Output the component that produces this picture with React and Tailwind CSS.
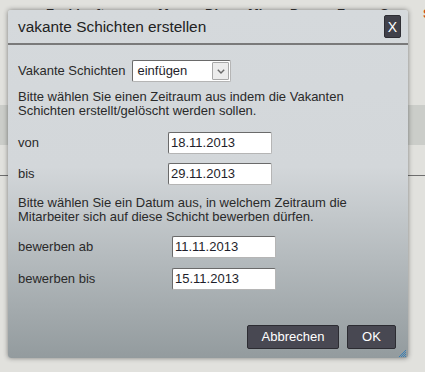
export default function App() {
  const font = "font-['Liberation_Sans',Arial,sans-serif]";
  const Input = ({ value }) => (
    <div className="w-[104px] h-[22px] bg-white border border-[#b5b5b5] border-t-[#6a6a6a] border-l-[#6a6a6a] rounded-[2px] pl-[2px] flex items-center text-[13px] text-[#1e1e2a]">
      {value}
    </div>
  );
  return (
    <div className={`relative w-[425px] h-[372px] overflow-hidden bg-[#e1e1dd] ${font}`}>
      {/* background page */}
      <div className="flex pt-[6px] text-[13px] font-bold text-[#333] leading-[15px] whitespace-nowrap">
        <div className="shrink-0 ml-[46px] w-[112px]">Fachkraft</div>
        <div className="shrink-0 w-[47px]">Mo</div>
        <div className="shrink-0 w-[43px]">Di</div>
        <div className="shrink-0 w-[42px]">Mi</div>
        <div className="shrink-0 w-[47px]">Do</div>
        <div className="shrink-0 w-[43px]">Fr</div>
        <div className="shrink-0 w-[43px]">Sa</div>
        <div className="shrink-0 text-[#d04a1a]">So</div>
      </div>
      <div className="mt-[84px] h-[40px] bg-[#cbcdc9]" />
      <div className="mt-[30px] h-px bg-[#6e6e6e]" />

      {/* dialog */}
      <div className="absolute left-[8px] top-[10px] w-[400px] h-[348px] rounded-[3px] shadow-[0_0_5px_rgba(0,0,0,0.45)] bg-[linear-gradient(to_bottom,#d5d9dc_0%,#d3d7da_45%,#939b9e_100%)] flex flex-col">
        <div className="h-[33px] flex items-center justify-between pl-[10px] pr-[7px]">
          <span className="text-[15.4px] text-[#222]">vakante Schichten erstellen</span>
          <div className="w-[17px] h-[23px] rounded-[2px] bg-[#41414a] border border-[#2e2e34] flex items-center justify-center text-white text-[14px] leading-none">
            X
          </div>
        </div>
        <div className="h-[2px] bg-[#7a7a7a]" />
        <div className="flex-1 flex flex-col pl-[10px] pr-[12px] pb-[9px] text-[13px] text-[#2a2a2a]">
          <div className="mt-[15px] flex items-center h-[22px]">
            <span>Vakante Schichten</span>
            <div className="ml-[7px] w-[99px] h-[22px] bg-white border border-[#b5b5b5] border-t-[#6a6a6a] border-l-[#6a6a6a] rounded-[2px] flex items-center justify-between pl-[4px] pr-[1px]">
              <span className="text-[#1e1e2a]">einfügen</span>
              <div className="w-[17px] h-[18px] bg-[#ececec] border border-[#a8a8a8] rounded-[1px] flex items-center justify-center">
                <svg width="8" height="5" viewBox="0 0 8 5">
                  <path d="M0.8 0.8 L4 4 L7.2 0.8" fill="none" stroke="#6a6a6a" strokeWidth="1.4" />
                </svg>
              </div>
            </div>
          </div>
          <p className="mt-[8px] leading-[14px]">
            Bitte wählen Sie einen Zeitraum aus indem die Vakanten
            <br />
            Schichten erstellt/gelöscht werden sollen.
          </p>
          <div className="mt-[14px] grid grid-cols-[150px_104px] items-center">
            <span>von</span>
            <Input value="18.11.2013" />
          </div>
          <div className="mt-[9px] grid grid-cols-[150px_104px] items-center">
            <span>bis</span>
            <Input value="29.11.2013" />
          </div>
          <p className="mt-[11px] leading-[14px]">
            Bitte wählen Sie ein Datum aus, in welchem Zeitraum die
            <br />
            Mitarbeiter sich auf diese Schicht bewerben dürfen.
          </p>
          <div className="mt-[12px] grid grid-cols-[154px_104px] items-center">
            <span>bewerben ab</span>
            <Input value="11.11.2013" />
          </div>
          <div className="mt-[10px] grid grid-cols-[154px_104px] items-center">
            <span>bewerben bis</span>
            <Input value="15.11.2013" />
          </div>
          <div className="mt-auto flex justify-end gap-[8px]">
            <div className="w-[92px] h-[24px] bg-[#484852] border border-[#2c2c32] rounded-[2px] flex items-center justify-center text-white text-[13px]">
              Abbrechen
            </div>
            <div className="w-[49px] h-[24px] bg-[#484852] border border-[#2c2c32] rounded-[2px] flex items-center justify-center text-white text-[13px]">
              OK
            </div>
          </div>
        </div>
        <svg className="absolute right-[2px] bottom-[1px]" width="7" height="7" viewBox="0 0 7 7">
          <g fill="#3a7fb5">
            <rect x="6" y="0" width="1" height="1" />
            <rect x="4" y="2" width="1" height="1" />
            <rect x="6" y="2" width="1" height="1" />
            <rect x="2" y="4" width="1" height="1" />
            <rect x="4" y="4" width="1" height="1" />
            <rect x="6" y="4" width="1" height="1" />
            <rect x="0" y="6" width="1" height="1" />
            <rect x="2" y="6" width="1" height="1" />
            <rect x="4" y="6" width="1" height="1" />
            <rect x="6" y="6" width="1" height="1" />
            <rect x="5" y="1" width="1" height="1" />
            <rect x="3" y="3" width="1" height="1" />
            <rect x="5" y="3" width="1" height="1" />
            <rect x="1" y="5" width="1" height="1" />
            <rect x="3" y="5" width="1" height="1" />
            <rect x="5" y="5" width="1" height="1" />
          </g>
        </svg>
      </div>
    </div>
  );
}
